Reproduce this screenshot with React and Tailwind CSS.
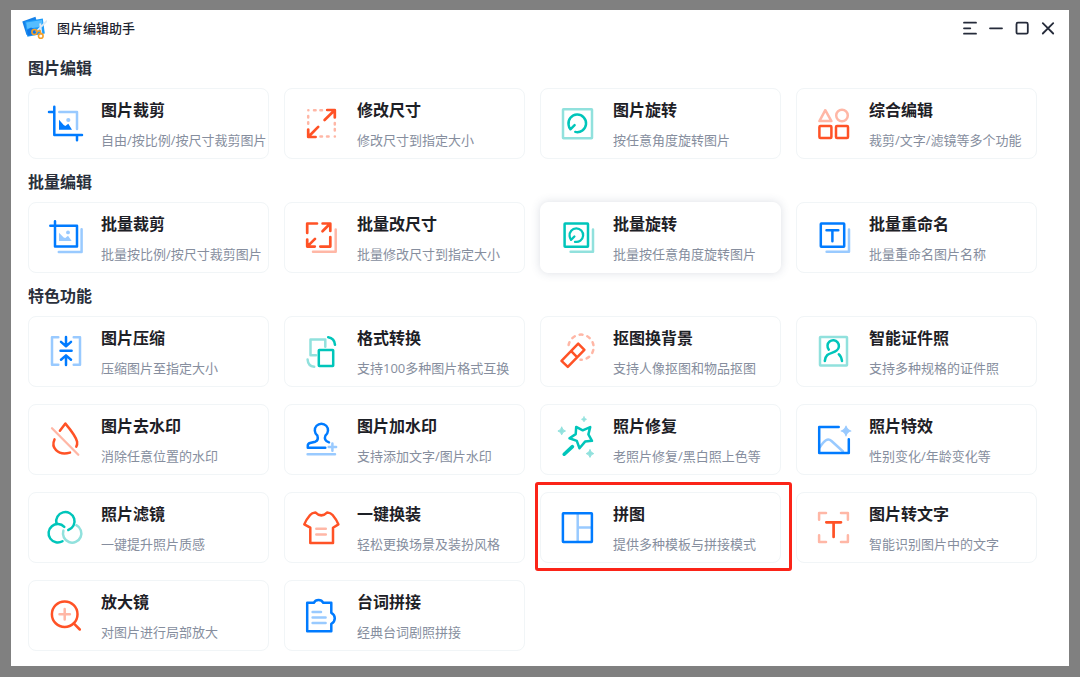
import clsx from "clsx";

const BLUE = { main: "#007bff", soft: "#99caff" };
const ORANGE = { main: "#ff5226", soft: "#ffb7a6" };
const TEAL = { main: "#00c5ba", soft: "#91e1dd" };

// Four-pointed sparkle centred on x, y
const Sparkle = ({ x, y, r, fill }) => (
  <path
    transform={`translate(${x} ${y}) scale(${r})`}
    d="M0-1Q.2-.2 1 0Q.2.2 0 1Q-.2.2-1 0Q-.2-.2 0-1Z"
    fill={fill}
    stroke={fill}
    strokeWidth="0.25"
  />
);

const icons = {
  crop: (c) => (
    <>
      <path d="M12.3 7H30V24" stroke={c.soft} />
      <path d="M7.3 1.8V30H35M2 7H7.3M30 30V35.3" />
      <path d="M12 14.7L16.7 20L18.3 21L21.3 18.7L25 24.7H12Z" fill={c.main} stroke="none" />
      <circle cx="21.3" cy="15" r="2.1" fill={c.soft} stroke="none" />
    </>
  ),
  resize: (c) => (
    <>
      <path
        d="M5.3 5.2h.1M11 5.2h1.6M17.4 5.2h1.6M5.2 11v1.6M5.2 17.2v1.6M31.8 18v1.6M31.8 24v1.6M31.8 31.6h.1M17.4 31.6h1.6M24 31.6h1.6"
        stroke={c.soft}
      />
      <path d="M24.2 5H31.8V12.4M31.3 5.5L21.6 15M5.2 24.6V32H12.6M5.7 31.5L15.2 21.9" strokeWidth="2.7" />
    </>
  ),
  rotate: (c) => (
    <>
      <rect x="4" y="4.3" width="29" height="29" rx="0.5" stroke={c.soft} />
      <path d="M16.3 26.9A8.8 8.8 0 1 0 9.6 19.8Q9.9 22.5 11.4 24.3L15.6 20.2" />
    </>
  ),
  combine: (c) => (
    <>
      <path d="M10.3 5.2L4.4 16.1H16.4Z" stroke={c.soft} />
      <circle cx="27" cy="10.5" r="5.8" stroke={c.soft} />
      <rect x="4.4" y="20.9" width="12" height="12" rx="1" />
      <rect x="21" y="20.9" width="12" height="12" rx="1" />
    </>
  ),
  batchCrop: (c) => (
    <>
      <path d="M34.6 10.3V33H11.8" stroke={c.soft} />
      <path d="M8 2.3V27.5H30V6.8H3.3" />
      <path d="M12 13.7L16.7 18.5L18.3 19L21 16.7L24.7 22H12Z" fill={c.soft} stroke="none" />
      <circle cx="21" cy="13.4" r="1.9" fill={c.soft} stroke="none" />
    </>
  ),
  batchResize: (c) => (
    <>
      <path d="M32.7 10.5V32.7H10" stroke={c.soft} />
      <path
        d="M4.2 14V4.5H14M19.6 4.5H27.3V12M26.8 5L19.5 12.3M27.3 18V27.6H17.3M4.2 20.5V27.6H11.8M4.7 27.1L12 19.9"
        strokeWidth="2.7"
      />
    </>
  ),
  batchRotate: (c) => (
    <>
      <path d="M34 10.5V32.7H11.6" stroke={c.soft} />
      <rect x="5.6" y="4.5" width="23.4" height="23.2" rx="0.5" />
      <path d="M16 22.8A6.8 6.8 0 1 0 10.6 17Q10.8 19.2 12 20.8L15.4 17.5" strokeWidth="2.3" />
    </>
  ),
  rename: (c) => (
    <>
      <path d="M34 10.5V32.7H11.6" stroke={c.soft} />
      <rect x="5.8" y="4.5" width="23.4" height="23.2" rx="0.5" />
      <path d="M11.5 11.2H23.3M17.4 11.2V22.3" />
    </>
  ),
  compress: (c) => (
    <>
      <path d="M11.3 4.2H5V31.7H11.3M26.7 4.2H33V31.7H26.7" stroke={c.soft} />
      <path d="M19 4V13M14 8.9L19 13.2L24 8.9M13.5 17.8H24.6M19 32V22.6M14 26.7L19 22.4L24 26.7" />
    </>
  ),
  convert: (c) => (
    <>
      <path d="M22.3 13.8V6.5H7.5V22.2H13" stroke={c.soft} />
      <path d="M4.6 26.5Q5 33.3 11.2 33.7" stroke={c.soft} />
      <rect x="15.8" y="17" width="14.4" height="16" rx="0.5" />
      <path d="M25.2 4.2Q31.5 5 32 11.8" />
    </>
  ),
  cutout: (c) => (
    <>
      <path d="M9.6 12A12.6 12.6 0 1 1 21.5 26.8" stroke={c.soft} strokeDasharray="3 5" />
      <path d="M19.2 10.6L25.4 16.8L8.8 33.9L2.5 27.8ZM12.7 18.7L17.8 23.8" />
    </>
  ),
  idPhoto: (c) => (
    <>
      <rect x="5" y="4" width="27" height="28.6" rx="0.5" stroke={c.soft} />
      <path d="M13.8 16.6A5.7 5.7 0 1 1 21.8 17.4C17.5 21.3 10.8 18.5 9.8 28M23.8 21.3Q26.2 23.3 27 28" />
    </>
  ),
  removeMark: (c) => (
    <>
      <path d="M5 7.3L31.3 33.7" stroke={c.soft} strokeWidth="2.3" />
      <path d="M12.9 9.7L18.4 2.6Q29 15.2 30.1 20.8Q30.5 23.6 29.3 25.7M7.5 18.4C4 26 10 35 23 31.6" />
    </>
  ),
  addMark: (c) => (
    <>
      <path d="M4.6 33.3H32M29.4 22.4V29.8M25.7 26.1H33.1" stroke={c.soft} />
      <path d="M22.3 26.7H4.8V24.6Q4.8 22.6 7 22L12.3 20.7C15.2 19.6 15.2 17.2 14.3 14.4A6.6 6.6 0 1 1 22.5 14.4C21.2 17.6 21.8 19.7 26 21.3" />
    </>
  ),
  repair: (c) => (
    <>
      <Sparkle x={2.7} y={10} r={3.8} fill={c.soft} />
      <Sparkle x={25} y={-1.7} r={2.6} fill={c.soft} />
      <Sparkle x={31} y={32.6} r={3.8} fill={c.soft} />
      <path d="M17.2 5.9L23.7 9.3L31.2 6.1L29.4 13.4L33 19.8L26.1 20.6L20.5 27.2L17.8 19.9L10.5 17.3L16.7 13.1Z" />
      <path d="M5.2 33.2L13.4 25.6" strokeWidth="3.6" />
    </>
  ),
  effect: (c) => (
    <>
      <path d="M4.8 26.2C9.5 19.5 12.6 16.5 16.5 20Q21 24 28 30.5" stroke={c.soft} />
      <Sparkle x={31} y={10} r={4.8} fill={c.soft} />
      <path d="M23.7 5.9H4.2V31.9H33.8V18.2" />
    </>
  ),
  filter: (c) => (
    <>
      <path d="M16.4 21.6A9.2 9.2 0 1 0 29.3 16.2" stroke={c.soft} />
      <path d="M9.4 14.4A9.2 9.2 0 1 1 21.3 21M17.3 17.8A9.2 9.2 0 1 0 15.5 32.2" />
    </>
  ),
  outfit: (c) => (
    <>
      <path d="M13.3 19.7H22.8M13.3 25.4H22.8" stroke={c.soft} />
      <path d="M12.3 3.4Q18.3 9.4 24.3 3.4Q27.6 3.6 29.6 6Q34 11.3 35.4 15.4L30 18.7V34H7.3V18.7L1.3 15.4Q2.7 11.3 7.1 6Q9 3.6 12.3 3.4Z" />
    </>
  ),
  collage: (c) => (
    <>
      <path d="M18.7 5V33M18.7 18.4H33" stroke={c.soft} strokeLinecap="butt" />
      <rect x="3.9" y="4.3" width="29" height="28.7" rx="0.5" />
    </>
  ),
  ocr: (c) => (
    <>
      <path d="M11 4H4.1V10.8M26 4H32.9V10.8M4.1 26.2V33H11M26 33H32.9V26.2" stroke={c.soft} />
      <path d="M11.3 13.3H26M18.6 13.3V28" strokeWidth="2.7" />
    </>
  ),
  magnify: (c) => (
    <>
      <path d="M17.7 12V22.4M12.5 17.2H22.9" stroke={c.soft} />
      <circle cx="17.7" cy="17.2" r="12.8" />
      <path d="M27 26.7L32.8 32.5" />
    </>
  ),
  lines: (c) => (
    <>
      <path d="M9.6 15.1H18M9.6 20.5H22.6M9.6 26H22.6" stroke={c.soft} />
      <path d="M4.2 5.8H10.8A5.4 5.4 0 0 1 20.3 5.8H28.3V15.8A6.1 6.1 0 0 1 28.3 26.8V34.2H4.2Z" />
    </>
  ),
};

const sections = [
  {
    title: "图片编辑",
    items: [
      { title: "图片裁剪", desc: "自由/按比例/按尺寸裁剪图片", icon: "crop", color: BLUE },
      { title: "修改尺寸", desc: "修改尺寸到指定大小", icon: "resize", color: ORANGE },
      { title: "图片旋转", desc: "按任意角度旋转图片", icon: "rotate", color: TEAL },
      { title: "综合编辑", desc: "裁剪/文字/滤镜等多个功能", icon: "combine", color: ORANGE },
    ],
  },
  {
    title: "批量编辑",
    items: [
      { title: "批量裁剪", desc: "批量按比例/按尺寸裁剪图片", icon: "batchCrop", color: BLUE },
      { title: "批量改尺寸", desc: "批量修改尺寸到指定大小", icon: "batchResize", color: ORANGE },
      { title: "批量旋转", desc: "批量按任意角度旋转图片", icon: "batchRotate", color: TEAL, raised: true },
      { title: "批量重命名", desc: "批量重命名图片名称", icon: "rename", color: BLUE },
    ],
  },
  {
    title: "特色功能",
    items: [
      { title: "图片压缩", desc: "压缩图片至指定大小", icon: "compress", color: BLUE },
      { title: "格式转换", desc: "支持100多种图片格式互换", icon: "convert", color: TEAL },
      { title: "抠图换背景", desc: "支持人像抠图和物品抠图", icon: "cutout", color: ORANGE },
      { title: "智能证件照", desc: "支持多种规格的证件照", icon: "idPhoto", color: TEAL },
      { title: "图片去水印", desc: "消除任意位置的水印", icon: "removeMark", color: ORANGE },
      { title: "图片加水印", desc: "支持添加文字/图片水印", icon: "addMark", color: BLUE },
      { title: "照片修复", desc: "老照片修复/黑白照上色等", icon: "repair", color: TEAL },
      { title: "照片特效", desc: "性别变化/年龄变化等", icon: "effect", color: BLUE },
      { title: "照片滤镜", desc: "一键提升照片质感", icon: "filter", color: TEAL },
      { title: "一键换装", desc: "轻松更换场景及装扮风格", icon: "outfit", color: ORANGE },
      { title: "拼图", desc: "提供多种模板与拼接模式", icon: "collage", color: BLUE, marked: true },
      { title: "图片转文字", desc: "智能识别图片中的文字", icon: "ocr", color: ORANGE },
      { title: "放大镜", desc: "对图片进行局部放大", icon: "magnify", color: ORANGE },
      { title: "台词拼接", desc: "经典台词剧照拼接", icon: "lines", color: BLUE },
    ],
  },
];

const windowButtons = [
  { label: "菜单", d: "M2 2.7H14M2 8.3H8.3M2 13.7H14" },
  { label: "最小化", d: "M2 8.3H14" },
  { label: "最大化", d: "M4 2.7H12.3Q13.8 2.7 13.8 4.2V12.2Q13.8 13.7 12.3 13.7H4Q2.5 13.7 2.5 12.2V4.2Q2.5 2.7 4 2.7Z" },
  { label: "关闭", d: "M2.8 3.1L13.2 13.5M13.2 3.1L2.8 13.5" },
];

function Logo() {
  return (
    <svg width="25" height="24" viewBox="0 0 25 24" fill="none" className="shrink-0">
      <path d="M0.3 5.6L13.5 0.8L17 14L4.5 19Z" fill="#1681e8" />
      <path d="M3 5.4L20.8 2.6L22.8 17.5L5.4 20.8Z" fill="#1c9bfa" />
      <path d="M4.2 6.5L20 4L20.8 10.4L5.2 12.8Z" fill="#55bdff" />
      <path d="M5 14L9 11.5L13 13.5L16 18L5.6 19.8Z" fill="#0d76e6" />
      <path d="M24.6 5.2L14.6 15.4M18.2 8.2L19.4 17" stroke="#dce9f5" strokeWidth="1.8" strokeLinecap="round" />
      <circle cx="12.4" cy="16" r="2.5" stroke="#f5a02a" strokeWidth="1.6" />
      <circle cx="18.8" cy="19.9" r="2.3" stroke="#f5a02a" strokeWidth="1.6" />
      <path d="M14.8 15.2L18.2 14.8L18.8 17.4" stroke="#f5a02a" strokeWidth="1.4" />
    </svg>
  );
}

function TitleBar() {
  return (
    <header className="flex h-9 items-center justify-between pl-[11px] pr-[13px]">
      <div className="flex items-center gap-[10px]">
        <Logo />
        <h1 className="text-[13px] leading-5 font-medium text-[#1d2330]">图片编辑助手</h1>
      </div>
      <div className="flex items-center gap-[10px]">
        {windowButtons.map(({ label, d }) => (
          <button key={label} type="button" aria-label={label} className="text-[#252b3a]">
            <svg width="16" height="16" viewBox="0 0 16 16" fill="none" className="block">
              <path d={d} stroke="currentColor" strokeWidth="1.8" strokeLinecap="round" />
            </svg>
          </button>
        ))}
      </div>
    </header>
  );
}

function FeatureCard({ item }) {
  const { title, desc, icon, color, raised, marked } = item;

  return (
    <div className="relative">
      <button
        type="button"
        className={clsx(
          "flex w-full items-center gap-[18px] rounded-lg border bg-white pt-[7px] pb-2 pl-[18px] text-left",
          raised
            ? "border-white shadow-[0_0_10px_rgba(60,80,110,0.18)]"
            : "border-[#f1f5f7]"
        )}
      >
        <svg
          width="36"
          height="36"
          viewBox="0 0 36 36"
          fill="none"
          stroke={color.main}
          strokeWidth="2.5"
          strokeLinecap="round"
          strokeLinejoin="round"
          className="shrink-0 overflow-visible"
        >
          {icons[icon](color)}
        </svg>
        <span className="flex flex-col gap-2 pt-0.5 whitespace-nowrap">
          <span className="text-base leading-6 font-bold text-[#1d2026]">{title}</span>
          <span className="text-[13px] leading-5 text-[#868e9e]">{desc}</span>
        </span>
      </button>
      {marked && (
        <div className="pointer-events-none absolute -top-[10px] -right-[11px] -bottom-2 -left-[5px] rounded-[3px] border-3 border-[#fb2418]" />
      )}
    </div>
  );
}

export default function App() {
  return (
    <div className="flex min-h-screen bg-[#808080] px-[11px] pt-[10px] pb-[11px] font-['Open_Sans','Noto_Sans_CJK_SC',sans-serif]">
      <div className="min-w-0 flex-1 bg-white">
        <TitleBar />
        <main className="flex flex-col gap-[11px] pt-[10px] pr-8 pb-[15px] pl-[17px]">
          {sections.map((section) => (
            <section key={section.title} className="flex flex-col gap-2">
              <h2 className="text-base leading-6 font-bold text-[#2a303c]">{section.title}</h2>
              <div className="grid grid-cols-4 gap-x-[15px] gap-y-[17px]">
                {section.items.map((item) => (
                  <FeatureCard key={item.title} item={item} />
                ))}
              </div>
            </section>
          ))}
        </main>
      </div>
    </div>
  );
}
